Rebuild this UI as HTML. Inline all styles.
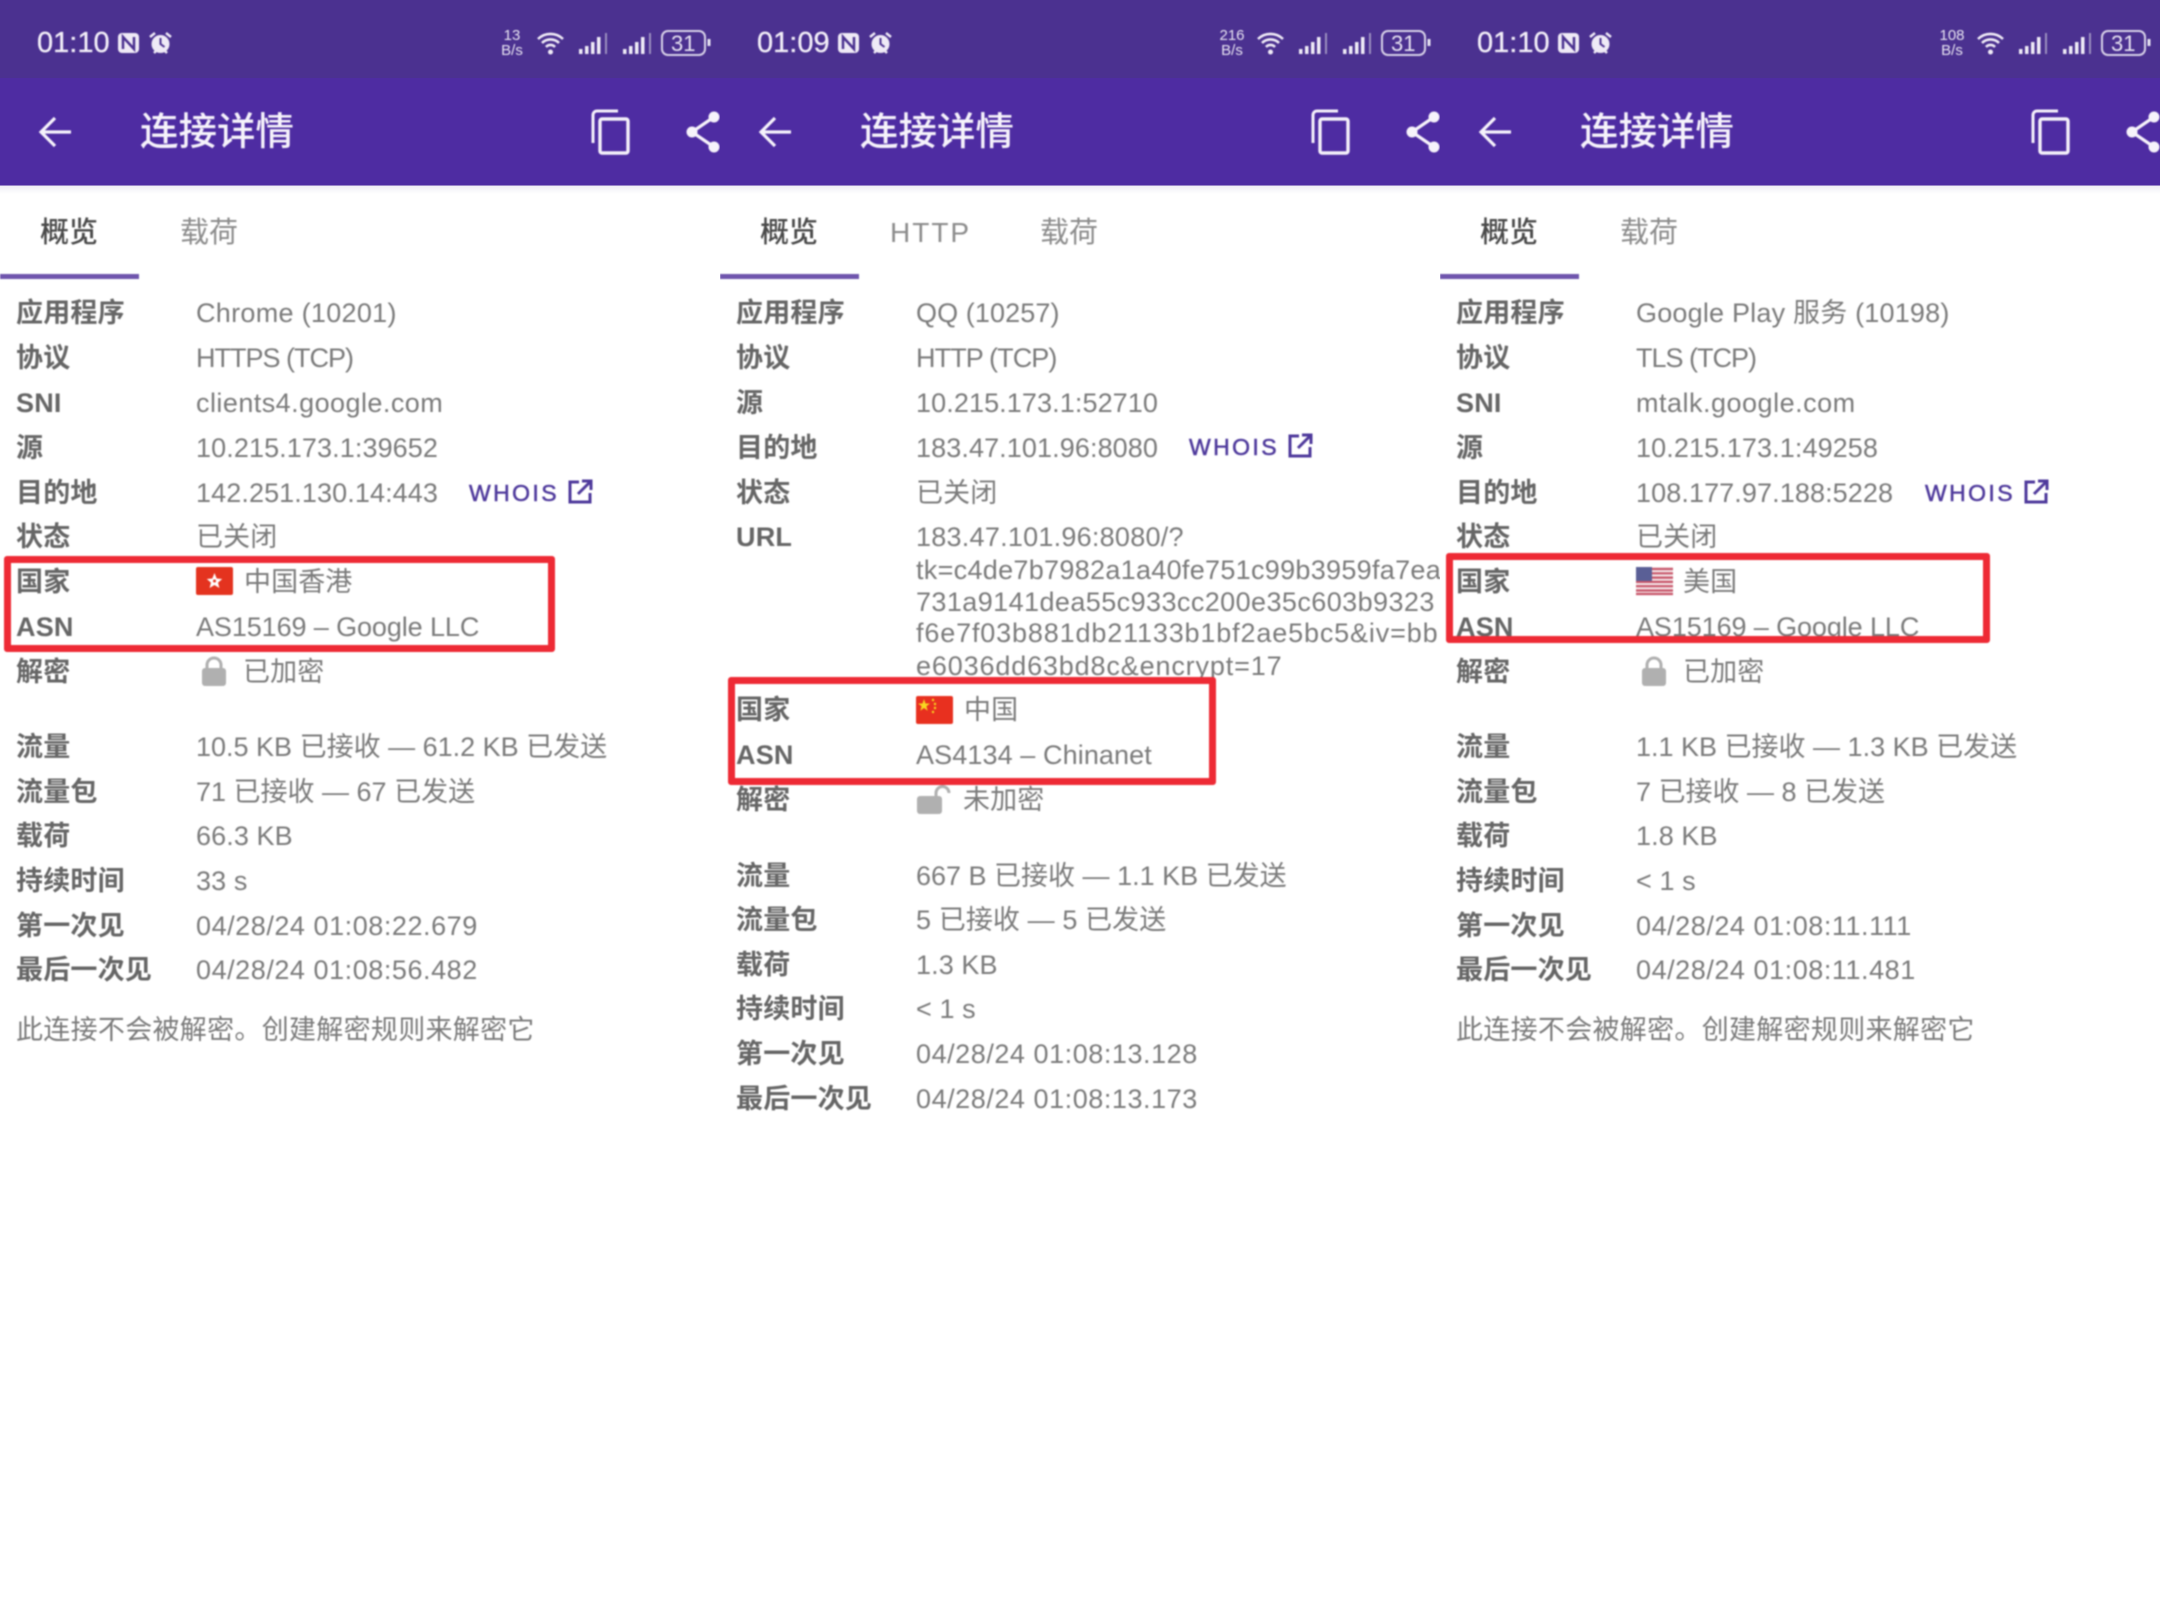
<!DOCTYPE html>
<html lang="zh">
<head>
<meta charset="utf-8">
<title>连接详情</title>
<style>
html,body{margin:0;padding:0;background:#fff}
body{width:2160px;height:1620px;position:relative;overflow:hidden;font-family:"Liberation Sans","Noto Sans CJK SC",sans-serif}
.p{position:absolute;top:0;width:720px;height:1620px;overflow:hidden;background:#fff}
.in{position:absolute;left:0;top:0;width:720px;height:1620px;filter:blur(.7px)}
.sb{position:absolute;left:0;top:0;width:720px;height:78px;background:#4b3190}
.tb{position:absolute;left:0;top:78px;width:720px;height:107px;background:#4e2ca2;border-bottom:1px solid #9a86c8}
.sh{position:absolute;left:0;top:186px;width:720px;height:8px;background:linear-gradient(#f0eef5,#fff)}
.t{position:absolute;white-space:nowrap;line-height:40px;height:40px}
.l{left:16px;font-size:27px;font-weight:700;color:#666;letter-spacing:.2px}
.v{left:196px;font-size:27px;color:#7b7b7b;letter-spacing:.1px}
.d{letter-spacing:.55px}
.n{letter-spacing:.3px}
.time{left:37px;top:23px;font-size:29px;color:#f2eef8;letter-spacing:0;-webkit-text-stroke:.3px #f2eef8}
.title{left:140px;top:113px;font-size:38.500px;color:#f6f3fb;font-weight:500}
.tab{top:213px;font-size:29px;color:#8c8c8c}
.tabon{color:#4a4a4a;font-weight:500}
.ul{position:absolute;left:0;top:274px;width:139px;height:5px;background:#6f55ad}
.who{font-size:23px;color:#4f3a9c;letter-spacing:2.400px;-webkit-text-stroke:.5px #4f3a9c}
.sp{font-size:15px;color:#e8e4f2;line-height:15px;height:15px;text-align:center;width:30px}
.bat{font-size:22px;color:#e8e4f2;line-height:24px;height:24px}
.box{position:absolute;border:7px solid #ee2a35;border-radius:3px;box-sizing:border-box}
.ic{position:absolute;overflow:visible}
</style>
</head>
<body>

<!-- PANEL 1 -->
<div class="p" style="left:0">
<div class="sb"></div><div class="tb"></div><div class="sh"></div>
<div class="in">
<span class="t time">01:10</span>
<svg class="ic" style="left:117px;top:32px" width="23" height="22" viewBox="0 0 23 22"><rect x="1" y="1" width="21" height="20" rx="4" fill="#efeaf6"/><path d="M6 17V5l11 12V5" fill="none" stroke="#4b3190" stroke-width="2.5"/></svg>
<svg class="ic" style="left:148px;top:31px" width="25" height="25" viewBox="0 0 25 25"><circle cx="12.5" cy="13" r="9" fill="#efeaf6"/><path d="M12.5 7v6l4 3" fill="none" stroke="#4b3190" stroke-width="2"/><path d="M2 6l5-4M23 6l-5-4M6 22l2-2M19 22l-2-2" stroke="#efeaf6" stroke-width="2.5"/></svg>
<span class="t sp" style="left:497px;top:28px">13</span><span class="t sp" style="left:497px;top:43px">B/s</span>
<svg class="ic" style="left:534px;top:30px" width="33" height="26" viewBox="0 0 33 26"><path d="M4 9a18 18 0 0 1 25 0M8 13a12 12 0 0 1 17 0M12 17a6 6 0 0 1 9 0" fill="none" stroke="#f0ecf7" stroke-width="2.6"/><circle cx="16.5" cy="22" r="2.5" fill="#f0ecf7"/></svg>
<svg class="ic" style="left:578px;top:32px" width="30" height="23" viewBox="0 0 30 23"><path d="M1 22v-5h3.500v5zM7 22v-8h3.500v8zM13 22v-12h3.500v12zM19 22V5h3.500v17z" fill="#f0ecf7"/><path d="M28 22V1" stroke="#9c8fc0" stroke-width="2"/></svg>
<svg class="ic" style="left:622px;top:32px" width="30" height="23" viewBox="0 0 30 23"><path d="M1 22v-5h3.500v5zM7 22v-8h3.500v8zM13 22v-12h3.500v12zM19 22V5h3.500v17z" fill="#f0ecf7"/><path d="M28 22V1" stroke="#9c8fc0" stroke-width="2"/></svg>
<svg class="ic" style="left:660px;top:29px" width="52" height="28" viewBox="0 0 52 28"><rect x="2" y="2" width="43" height="24" rx="6" fill="none" stroke="#d8d2e8" stroke-width="2"/><path d="M49 10v7" stroke="#e8e4f2" stroke-width="3"/></svg>
<span class="t bat" style="left:671px;top:32px">31</span>
<svg class="ic" style="left:38px;top:115px" width="34" height="34" viewBox="0 0 34 34"><path d="M33 17H3M17 3L3 17l14 14" fill="none" stroke="#f6f3fb" stroke-width="3.200"/></svg>
<span class="t title">连接详情</span>
<svg class="ic" style="left:590px;top:109px" width="42" height="46" viewBox="0 0 42 46"><path d="M28 2H7a4 4 0 0 0-4 4v28" fill="none" stroke="#f4f0fa" stroke-width="3"/><rect x="10" y="10" width="28" height="34" rx="2" fill="none" stroke="#f4f0fa" stroke-width="3.400"/></svg>
<svg class="ic" style="left:686px;top:111px" width="34" height="42" viewBox="0 0 34 42"><path d="M28 6L6 21l22 15" fill="none" stroke="#f6f3fb" stroke-width="3.200"/><circle cx="6" cy="21" r="5.500" fill="#f6f3fb"/><circle cx="28" cy="6" r="5.500" fill="#f6f3fb"/><circle cx="28" cy="36" r="5.500" fill="#f6f3fb"/></svg>
<span class="t tab tabon" style="left:40px">概览</span>
<span class="t tab" style="left:180px">载荷</span>
<div class="ul"></div>

<span class="t l" style="top:293px">应用程序</span><span class="t v" style="top:293px;letter-spacing:.3px">Chrome (10201)</span>
<span class="t l" style="top:338px">协议</span><span class="t v" style="top:338px;letter-spacing:-1px">HTTPS (TCP)</span>
<span class="t l" style="top:383px">SNI</span><span class="t v" style="top:383px;letter-spacing:.45px">clients4.google.com</span>
<span class="t l" style="top:428px">源</span><span class="t v" style="top:428px">10.215.173.1:39652</span>
<span class="t l" style="top:473px">目的地</span><span class="t v" style="top:473px">142.251.130.14:443</span>
<span class="t who" style="left:469px;top:473px">WHOIS</span>
<svg class="ic" style="left:567px;top:479px" width="26" height="26" viewBox="0 0 26 26"><path d="M12 3H3v20h20v-9M15 2h9v9M24 2L11 15" fill="none" stroke="#4f3a9c" stroke-width="3"/></svg>
<span class="t l" style="top:517px">状态</span><span class="t v" style="top:517px">已关闭</span>
<span class="t l" style="top:562px">国家</span>
<svg class="ic" style="left:196px;top:567px" width="37" height="28" viewBox="0 0 37 28"><rect width="37" height="28" rx="2" fill="#e4331f"/><path d="M18.500 6l2.200 5.500 5.500.5-4.200 3.600 1.400 5.400-4.900-3-4.900 3 1.400-5.400-4.200-3.600 5.500-.5z" fill="#fff"/><circle cx="18.500" cy="14" r="1.500" fill="#e4331f"/></svg>
<span class="t v" style="left:244px;top:562px">中国香港</span>
<span class="t l" style="top:607px">ASN</span><span class="t v" style="top:607px;letter-spacing:-.1px">AS15169 – Google LLC</span>
<span class="t l" style="top:652px">解密</span>
<svg class="ic" style="left:200px;top:656px" width="28" height="30" viewBox="0 0 28 30"><path d="M7 14V9a7 7 0 0 1 14 0v5" fill="none" stroke="#b0b0b0" stroke-width="3"/><rect x="2" y="12" width="24" height="18" rx="3" fill="#b0b0b0"/></svg>
<span class="t v" style="left:243px;top:652px">已加密</span>
<span class="t l" style="top:727px">流量</span><span class="t v" style="top:727px;letter-spacing:0">10.5 KB 已接收 — 61.2 KB 已发送</span>
<span class="t l" style="top:772px">流量包</span><span class="t v" style="top:772px;letter-spacing:0">71 已接收 — 67 已发送</span>
<span class="t l" style="top:816px">载荷</span><span class="t v" style="top:816px">66.3 KB</span>
<span class="t l" style="top:861px">持续时间</span><span class="t v" style="top:861px">33 s</span>
<span class="t l" style="top:906px">第一次见</span><span class="t v d" style="top:906px">04/28/24 01:08:22.679</span>
<span class="t l" style="top:950px">最后一次见</span><span class="t v d" style="top:950px">04/28/24 01:08:56.482</span>
<span class="t v n" style="left:16px;top:1010px">此连接不会被解密。创建解密规则来解密它</span>
<div class="box" style="left:4px;top:556px;width:551px;height:96px"></div>
</div>
</div>

<!-- PANEL 2 -->
<div class="p" style="left:720px">
<div class="sb"></div><div class="tb"></div><div class="sh"></div>
<div class="in">
<span class="t time">01:09</span>
<svg class="ic" style="left:117px;top:32px" width="23" height="22" viewBox="0 0 23 22"><rect x="1" y="1" width="21" height="20" rx="4" fill="#efeaf6"/><path d="M6 17V5l11 12V5" fill="none" stroke="#4b3190" stroke-width="2.5"/></svg>
<svg class="ic" style="left:148px;top:31px" width="25" height="25" viewBox="0 0 25 25"><circle cx="12.5" cy="13" r="9" fill="#efeaf6"/><path d="M12.5 7v6l4 3" fill="none" stroke="#4b3190" stroke-width="2"/><path d="M2 6l5-4M23 6l-5-4M6 22l2-2M19 22l-2-2" stroke="#efeaf6" stroke-width="2.5"/></svg>
<span class="t sp" style="left:497px;top:28px">216</span><span class="t sp" style="left:497px;top:43px">B/s</span>
<svg class="ic" style="left:534px;top:30px" width="33" height="26" viewBox="0 0 33 26"><path d="M4 9a18 18 0 0 1 25 0M8 13a12 12 0 0 1 17 0M12 17a6 6 0 0 1 9 0" fill="none" stroke="#f0ecf7" stroke-width="2.6"/><circle cx="16.5" cy="22" r="2.5" fill="#f0ecf7"/></svg>
<svg class="ic" style="left:578px;top:32px" width="30" height="23" viewBox="0 0 30 23"><path d="M1 22v-5h3.500v5zM7 22v-8h3.500v8zM13 22v-12h3.500v12zM19 22V5h3.500v17z" fill="#f0ecf7"/><path d="M28 22V1" stroke="#9c8fc0" stroke-width="2"/></svg>
<svg class="ic" style="left:622px;top:32px" width="30" height="23" viewBox="0 0 30 23"><path d="M1 22v-5h3.500v5zM7 22v-8h3.500v8zM13 22v-12h3.500v12zM19 22V5h3.500v17z" fill="#f0ecf7"/><path d="M28 22V1" stroke="#9c8fc0" stroke-width="2"/></svg>
<svg class="ic" style="left:660px;top:29px" width="52" height="28" viewBox="0 0 52 28"><rect x="2" y="2" width="43" height="24" rx="6" fill="none" stroke="#d8d2e8" stroke-width="2"/><path d="M49 10v7" stroke="#e8e4f2" stroke-width="3"/></svg>
<span class="t bat" style="left:671px;top:32px">31</span>
<svg class="ic" style="left:38px;top:115px" width="34" height="34" viewBox="0 0 34 34"><path d="M33 17H3M17 3L3 17l14 14" fill="none" stroke="#f6f3fb" stroke-width="3.200"/></svg>
<span class="t title">连接详情</span>
<svg class="ic" style="left:590px;top:109px" width="42" height="46" viewBox="0 0 42 46"><path d="M28 2H7a4 4 0 0 0-4 4v28" fill="none" stroke="#f4f0fa" stroke-width="3"/><rect x="10" y="10" width="28" height="34" rx="2" fill="none" stroke="#f4f0fa" stroke-width="3.400"/></svg>
<svg class="ic" style="left:686px;top:111px" width="34" height="42" viewBox="0 0 34 42"><path d="M28 6L6 21l22 15" fill="none" stroke="#f6f3fb" stroke-width="3.200"/><circle cx="6" cy="21" r="5.500" fill="#f6f3fb"/><circle cx="28" cy="6" r="5.500" fill="#f6f3fb"/><circle cx="28" cy="36" r="5.500" fill="#f6f3fb"/></svg>
<span class="t tab tabon" style="left:40px">概览</span>
<span class="t tab" style="left:170px;letter-spacing:2px;font-size:28px">HTTP</span>
<span class="t tab" style="left:320px">载荷</span>
<div class="ul"></div>

<span class="t l" style="top:293px">应用程序</span><span class="t v" style="top:293px">QQ (10257)</span>
<span class="t l" style="top:338px">协议</span><span class="t v" style="top:338px;letter-spacing:-.9px">HTTP (TCP)</span>
<span class="t l" style="top:383px">源</span><span class="t v" style="top:383px">10.215.173.1:52710</span>
<span class="t l" style="top:428px">目的地</span><span class="t v" style="top:428px">183.47.101.96:8080</span>
<span class="t who" style="left:469px;top:427px">WHOIS</span>
<svg class="ic" style="left:567px;top:433px" width="26" height="26" viewBox="0 0 26 26"><path d="M12 3H3v20h20v-9M15 2h9v9M24 2L11 15" fill="none" stroke="#4f3a9c" stroke-width="3"/></svg>
<span class="t l" style="top:473px">状态</span><span class="t v" style="top:473px">已关闭</span>
<span class="t l" style="top:517px">URL</span>
<span class="t v" style="top:517px;letter-spacing:.25px">183.47.101.96:8080/?</span>
<span class="t v" style="top:550px;letter-spacing:.3px">tk=c4de7b7982a1a40fe751c99b3959fa7ea2c</span>
<span class="t v" style="top:582px;letter-spacing:.42px">731a9141dea55c933cc200e35c603b9323</span>
<span class="t v" style="top:613px;letter-spacing:.85px">f6e7f03b881db21133b1bf2ae5bc5&amp;iv=bb</span>
<span class="t v" style="top:646px;letter-spacing:.85px">e6036dd63bd8c&amp;encrypt=17</span>
<span class="t l" style="top:690px">国家</span>
<svg class="ic" style="left:196px;top:696px" width="37" height="28" viewBox="0 0 37 28"><rect width="37" height="28" rx="2" fill="#e8301f"/><path d="M8 3l1.500 4.500 4.500 0-3.600 2.700 1.300 4.500L8 12l-3.700 2.700 1.300-4.500L2 7.500l4.500 0z" fill="#f8d820"/><circle cx="17" cy="4" r="1.200" fill="#f8d820"/><circle cx="19" cy="8" r="1.200" fill="#f8d820"/><circle cx="19" cy="12" r="1.200" fill="#f8d820"/><circle cx="17" cy="16" r="1.200" fill="#f8d820"/></svg>
<span class="t v" style="left:244px;top:690px">中国</span>
<span class="t l" style="top:735px">ASN</span><span class="t v" style="top:735px">AS4134 – Chinanet</span>
<span class="t l" style="top:780px">解密</span>
<svg class="ic" style="left:196px;top:784px" width="36" height="30" viewBox="0 0 36 30"><path d="M20 14V9a6.500 6.500 0 0 1 13 0" fill="none" stroke="#b0b0b0" stroke-width="3"/><rect x="1" y="12" width="25" height="18" rx="3" fill="#b0b0b0"/></svg>
<span class="t v" style="left:243px;top:780px">未加密</span>
<span class="t l" style="top:856px">流量</span><span class="t v" style="top:856px;letter-spacing:0">667 B 已接收 — 1.1 KB 已发送</span>
<span class="t l" style="top:900px">流量包</span><span class="t v" style="top:900px">5 已接收 — 5 已发送</span>
<span class="t l" style="top:945px">载荷</span><span class="t v" style="top:945px">1.3 KB</span>
<span class="t l" style="top:989px">持续时间</span><span class="t v" style="top:989px">&lt; 1 s</span>
<span class="t l" style="top:1034px">第一次见</span><span class="t v d" style="top:1034px">04/28/24 01:08:13.128</span>
<span class="t l" style="top:1079px">最后一次见</span><span class="t v d" style="top:1079px">04/28/24 01:08:13.173</span>
<div class="box" style="left:8px;top:677px;width:488px;height:108px"></div>
</div>
</div>

<!-- PANEL 3 -->
<div class="p" style="left:1440px">
<div class="sb"></div><div class="tb"></div><div class="sh"></div>
<div class="in">
<span class="t time">01:10</span>
<svg class="ic" style="left:117px;top:32px" width="23" height="22" viewBox="0 0 23 22"><rect x="1" y="1" width="21" height="20" rx="4" fill="#efeaf6"/><path d="M6 17V5l11 12V5" fill="none" stroke="#4b3190" stroke-width="2.5"/></svg>
<svg class="ic" style="left:148px;top:31px" width="25" height="25" viewBox="0 0 25 25"><circle cx="12.5" cy="13" r="9" fill="#efeaf6"/><path d="M12.5 7v6l4 3" fill="none" stroke="#4b3190" stroke-width="2"/><path d="M2 6l5-4M23 6l-5-4M6 22l2-2M19 22l-2-2" stroke="#efeaf6" stroke-width="2.5"/></svg>
<span class="t sp" style="left:497px;top:28px">108</span><span class="t sp" style="left:497px;top:43px">B/s</span>
<svg class="ic" style="left:534px;top:30px" width="33" height="26" viewBox="0 0 33 26"><path d="M4 9a18 18 0 0 1 25 0M8 13a12 12 0 0 1 17 0M12 17a6 6 0 0 1 9 0" fill="none" stroke="#f0ecf7" stroke-width="2.6"/><circle cx="16.5" cy="22" r="2.5" fill="#f0ecf7"/></svg>
<svg class="ic" style="left:578px;top:32px" width="30" height="23" viewBox="0 0 30 23"><path d="M1 22v-5h3.500v5zM7 22v-8h3.500v8zM13 22v-12h3.500v12zM19 22V5h3.500v17z" fill="#f0ecf7"/><path d="M28 22V1" stroke="#9c8fc0" stroke-width="2"/></svg>
<svg class="ic" style="left:622px;top:32px" width="30" height="23" viewBox="0 0 30 23"><path d="M1 22v-5h3.500v5zM7 22v-8h3.500v8zM13 22v-12h3.500v12zM19 22V5h3.500v17z" fill="#f0ecf7"/><path d="M28 22V1" stroke="#9c8fc0" stroke-width="2"/></svg>
<svg class="ic" style="left:660px;top:29px" width="52" height="28" viewBox="0 0 52 28"><rect x="2" y="2" width="43" height="24" rx="6" fill="none" stroke="#d8d2e8" stroke-width="2"/><path d="M49 10v7" stroke="#e8e4f2" stroke-width="3"/></svg>
<span class="t bat" style="left:671px;top:32px">31</span>
<svg class="ic" style="left:38px;top:115px" width="34" height="34" viewBox="0 0 34 34"><path d="M33 17H3M17 3L3 17l14 14" fill="none" stroke="#f6f3fb" stroke-width="3.200"/></svg>
<span class="t title">连接详情</span>
<svg class="ic" style="left:590px;top:109px" width="42" height="46" viewBox="0 0 42 46"><path d="M28 2H7a4 4 0 0 0-4 4v28" fill="none" stroke="#f4f0fa" stroke-width="3"/><rect x="10" y="10" width="28" height="34" rx="2" fill="none" stroke="#f4f0fa" stroke-width="3.400"/></svg>
<svg class="ic" style="left:686px;top:111px" width="34" height="42" viewBox="0 0 34 42"><path d="M28 6L6 21l22 15" fill="none" stroke="#f6f3fb" stroke-width="3.200"/><circle cx="6" cy="21" r="5.500" fill="#f6f3fb"/><circle cx="28" cy="6" r="5.500" fill="#f6f3fb"/><circle cx="28" cy="36" r="5.500" fill="#f6f3fb"/></svg>
<span class="t tab tabon" style="left:40px">概览</span>
<span class="t tab" style="left:180px">载荷</span>
<div class="ul"></div>

<span class="t l" style="top:293px">应用程序</span><span class="t v" style="top:293px;letter-spacing:.2px">Google Play 服务 (10198)</span>
<span class="t l" style="top:338px">协议</span><span class="t v" style="top:338px;letter-spacing:-1px">TLS (TCP)</span>
<span class="t l" style="top:383px">SNI</span><span class="t v" style="top:383px;letter-spacing:.5px">mtalk.google.com</span>
<span class="t l" style="top:428px">源</span><span class="t v" style="top:428px">10.215.173.1:49258</span>
<span class="t l" style="top:473px">目的地</span><span class="t v" style="top:473px">108.177.97.188:5228</span>
<span class="t who" style="left:485px;top:473px">WHOIS</span>
<svg class="ic" style="left:583px;top:479px" width="26" height="26" viewBox="0 0 26 26"><path d="M12 3H3v20h20v-9M15 2h9v9M24 2L11 15" fill="none" stroke="#4f3a9c" stroke-width="3"/></svg>
<span class="t l" style="top:517px">状态</span><span class="t v" style="top:517px">已关闭</span>
<span class="t l" style="top:562px">国家</span>
<svg class="ic" style="left:196px;top:567px" width="37" height="28" viewBox="0 0 37 28"><rect width="37" height="28" fill="#f4e6e8"/><path d="M0 2h37M0 6.300h37M0 10.600h37M0 14.900h37M0 19.200h37M0 23.500h37M0 27h37" stroke="#c8566a" stroke-width="2.200"/><rect width="16" height="14" fill="#5a5f96"/></svg>
<span class="t v" style="left:243px;top:562px">美国</span>
<span class="t l" style="top:607px">ASN</span><span class="t v" style="top:607px;letter-spacing:-.1px">AS15169 – Google LLC</span>
<span class="t l" style="top:652px">解密</span>
<svg class="ic" style="left:200px;top:656px" width="28" height="30" viewBox="0 0 28 30"><path d="M7 14V9a7 7 0 0 1 14 0v5" fill="none" stroke="#b0b0b0" stroke-width="3"/><rect x="2" y="12" width="24" height="18" rx="3" fill="#b0b0b0"/></svg>
<span class="t v" style="left:243px;top:652px">已加密</span>
<span class="t l" style="top:727px">流量</span><span class="t v" style="top:727px;letter-spacing:0">1.1 KB 已接收 — 1.3 KB 已发送</span>
<span class="t l" style="top:772px">流量包</span><span class="t v" style="top:772px;letter-spacing:0">7 已接收 — 8 已发送</span>
<span class="t l" style="top:816px">载荷</span><span class="t v" style="top:816px">1.8 KB</span>
<span class="t l" style="top:861px">持续时间</span><span class="t v" style="top:861px">&lt; 1 s</span>
<span class="t l" style="top:906px">第一次见</span><span class="t v d" style="top:906px">04/28/24 01:08:11.111</span>
<span class="t l" style="top:950px">最后一次见</span><span class="t v d" style="top:950px">04/28/24 01:08:11.481</span>
<span class="t v n" style="left:16px;top:1010px">此连接不会被解密。创建解密规则来解密它</span>
<div class="box" style="left:6px;top:553px;width:544px;height:90px"></div>
</div>
</div>

</body>
</html>
